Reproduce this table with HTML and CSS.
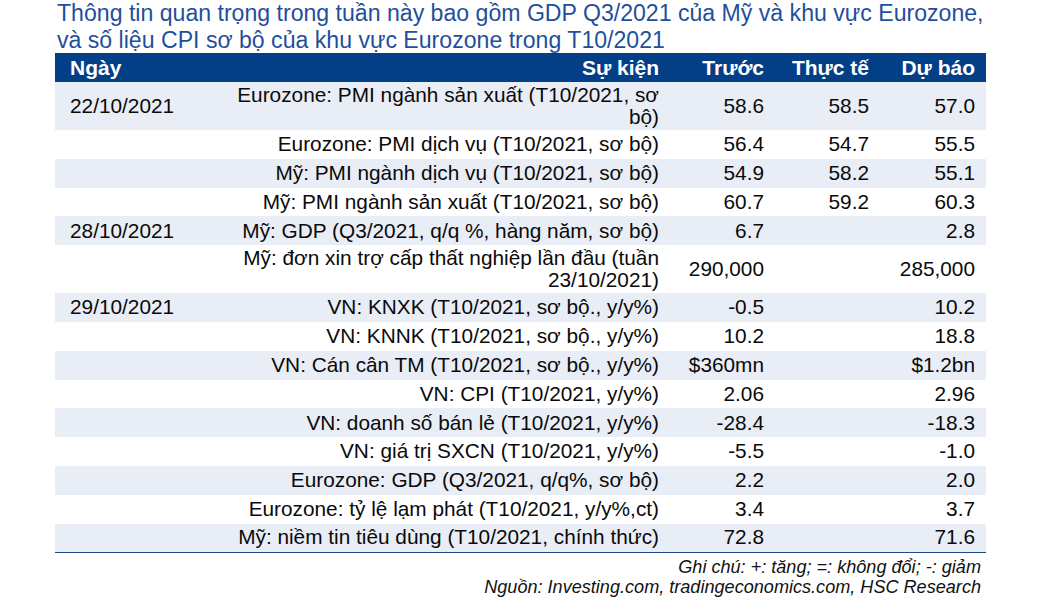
FILE: index.html
```html
<!DOCTYPE html>
<html lang="vi">
<head>
<meta charset="utf-8">
<title>Lịch sự kiện</title>
<link rel="stylesheet" href="styles.css">
</head>
<body>
<div class="page">
  <h1 class="title">Thông tin quan trọng trong tuần này bao gồm GDP Q3/2021 của Mỹ và khu vực Eurozone,<br>và số liệu CPI sơ bộ của khu vực Eurozone trong T10/2021</h1>
  <table class="events">
    <colgroup>
      <col class="w-date">
      <col class="w-event">
      <col class="w-num">
      <col class="w-num">
      <col class="w-last">
    </colgroup>
    <thead>
      <tr>
        <th class="c-date">Ngày</th>
        <th>Sự kiện</th>
        <th>Trước</th>
        <th>Thực tế</th>
        <th>Dự báo</th>
      </tr>
    </thead>
    <tbody>
      <tr class="shade">
        <td class="c-date">22/10/2021</td>
        <td>Eurozone: PMI ngành sản xuất (T10/2021, sơ<br>bộ)</td>
        <td>58.6</td>
        <td>58.5</td>
        <td>57.0</td>
      </tr>
      <tr>
        <td class="c-date"></td>
        <td>Eurozone: PMI dịch vụ (T10/2021, sơ bộ)</td>
        <td>56.4</td>
        <td>54.7</td>
        <td>55.5</td>
      </tr>
      <tr class="shade">
        <td class="c-date"></td>
        <td>Mỹ: PMI ngành dịch vụ (T10/2021, sơ bộ)</td>
        <td>54.9</td>
        <td>58.2</td>
        <td>55.1</td>
      </tr>
      <tr>
        <td class="c-date"></td>
        <td>Mỹ: PMI ngành sản xuất (T10/2021, sơ bộ)</td>
        <td>60.7</td>
        <td>59.2</td>
        <td>60.3</td>
      </tr>
      <tr class="shade">
        <td class="c-date">28/10/2021</td>
        <td>Mỹ: GDP (Q3/2021, q/q %, hàng năm, sơ bộ)</td>
        <td>6.7</td>
        <td></td>
        <td>2.8</td>
      </tr>
      <tr>
        <td class="c-date"></td>
        <td>Mỹ: đơn xin trợ cấp thất nghiệp lần đầu (tuần<br>23/10/2021)</td>
        <td>290,000</td>
        <td></td>
        <td>285,000</td>
      </tr>
      <tr class="shade">
        <td class="c-date">29/10/2021</td>
        <td>VN: KNXK (T10/2021, sơ bộ., y/y%)</td>
        <td>-0.5</td>
        <td></td>
        <td>10.2</td>
      </tr>
      <tr>
        <td class="c-date"></td>
        <td>VN: KNNK (T10/2021, sơ bộ., y/y%)</td>
        <td>10.2</td>
        <td></td>
        <td>18.8</td>
      </tr>
      <tr class="shade">
        <td class="c-date"></td>
        <td>VN: Cán cân TM (T10/2021, sơ bộ., y/y%)</td>
        <td>$360mn</td>
        <td></td>
        <td>$1.2bn</td>
      </tr>
      <tr>
        <td class="c-date"></td>
        <td>VN: CPI (T10/2021, y/y%)</td>
        <td>2.06</td>
        <td></td>
        <td>2.96</td>
      </tr>
      <tr class="shade">
        <td class="c-date"></td>
        <td>VN: doanh số bán lẻ (T10/2021, y/y%)</td>
        <td>-28.4</td>
        <td></td>
        <td>-18.3</td>
      </tr>
      <tr>
        <td class="c-date"></td>
        <td>VN: giá trị SXCN (T10/2021, y/y%)</td>
        <td>-5.5</td>
        <td></td>
        <td>-1.0</td>
      </tr>
      <tr class="shade">
        <td class="c-date"></td>
        <td>Eurozone: GDP (Q3/2021, q/q%, sơ bộ)</td>
        <td>2.2</td>
        <td></td>
        <td>2.0</td>
      </tr>
      <tr>
        <td class="c-date"></td>
        <td>Eurozone: tỷ lệ lạm phát (T10/2021, y/y%,ct)</td>
        <td>3.4</td>
        <td></td>
        <td>3.7</td>
      </tr>
      <tr class="shade">
        <td class="c-date"></td>
        <td>Mỹ: niềm tin tiêu dùng (T10/2021, chính thức)</td>
        <td>72.8</td>
        <td></td>
        <td>71.6</td>
      </tr>
    </tbody>
  </table>
  <div class="notes">
    <p class="note">Ghi chú: +: tăng; =: không đổi; -: giảm</p>
    <p class="note">Nguồn: Investing.com, tradingeconomics.com, HSC Research</p>
  </div>
</div>
</body>
</html>
```

FILE: styles.css
```css
html, body {
  margin: 0;
  padding: 0;
  background: #ffffff;
}

.page {
  width: 931px;
  margin-left: 55px;
  font-family: "Liberation Sans", Arial, sans-serif;
}

.title {
  margin: 0;
  padding-left: 2px;
  font-size: 23.1px;
  line-height: 26.5px;
  font-weight: normal;
  color: #1f4f9c;
  white-space: nowrap;
}

.events {
  width: 931px;
  border-collapse: collapse;
  border-spacing: 0;
  table-layout: fixed;
  font-size: 20.8px;
  color: #0a0a0a;
  border-bottom: 1.5px solid #1f4a88;
}

.w-date { width: 177px; }
.w-event { width: 438px; }
.w-num { width: 105px; }
.w-last { width: 106px; }

.events th {
  background: #033f87;
  color: #ffffff;
  font-weight: bold;
  font-size: 21px;
  height: 29px;
  padding: 0 11px 0 0;
  line-height: 22px;
  vertical-align: middle;
  text-align: right;
  white-space: nowrap;
  overflow: hidden;
}

.events tbody tr {
  height: 28.8px;
}

.events td {
  padding: 1.5px 11px 1.5px 0;
  line-height: 22.5px;
  vertical-align: middle;
  text-align: right;
  white-space: nowrap;
}

.events .c-date {
  text-align: left;
  padding-left: 15px;
  padding-right: 0;
}

.shade td {
  background: #e9edf5;
}

.notes {
  padding-right: 5px;
  padding-top: 4px;
  text-align: right;
}

.note {
  margin: 0;
  font-size: 18.1px;
  line-height: 20px;
  font-style: italic;
  color: #111111;
}
```
